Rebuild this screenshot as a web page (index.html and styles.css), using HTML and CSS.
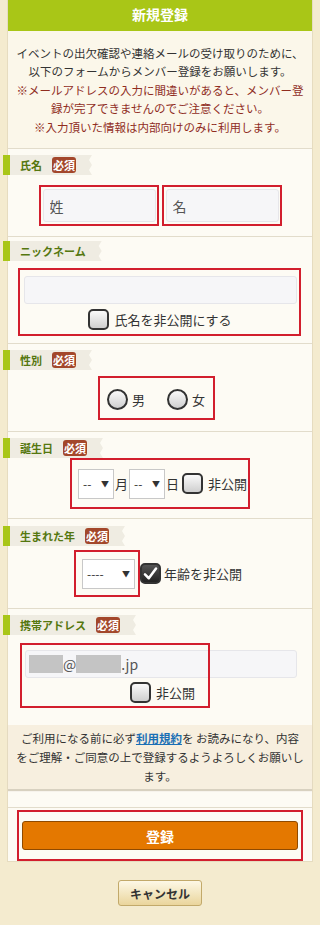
FILE: index.html
```html
<!DOCTYPE html>
<html lang="ja">
<head>
    <meta charset="UTF-8">
    <meta name="viewport" content="width=device-width, initial-scale=1.0">
    <title>新規登録</title>
    <link rel="stylesheet" href="styles.css">
</head>
<body>
    <div class="container">
        <h1 class="page-title">新規登録</h1>
        <div class="intro">
            イベントの出欠確認や連絡メールの受け取りのために、<br>
            以下のフォームからメンバー登録をお願いします。<br>
            <span class="notice">※メールアドレスの入力に間違いがあると、メンバー登<br>録が完了できませんのでご注意ください。</span><br>
            <span class="notice">※入力頂いた情報は内部向けのみに利用します。</span>
        </div>

        <div class="section sec-name">
            <div class="tab">氏名<span class="badge">必須</span></div>
            <div class="field name-field">
                <div class="mark"><input type="text" class="text-input" placeholder="姓"></div>
                <div class="mark"><input type="text" class="text-input" placeholder="名"></div>
            </div>
        </div>

        <div class="section sec-nick">
            <div class="tab">ニックネーム</div>
            <div class="field">
                <div class="mark nick-box">
                    <input type="text" class="text-input wide">
                    <label class="check-label"><span class="checkbox"></span>氏名を非公開にする</label>
                </div>
            </div>
        </div>

        <div class="section sec-gender">
            <div class="tab">性別<span class="badge">必須</span></div>
            <div class="field">
                <div class="mark gender-box">
                    <label class="radio-label"><span class="radio"></span>男</label>
                    <label class="radio-label"><span class="radio"></span>女</label>
                </div>
            </div>
        </div>

        <div class="section sec-birth">
            <div class="tab">誕生日<span class="badge">必須</span></div>
            <div class="field">
                <div class="mark birth-box">
                    <span class="select">--<span class="arrow">▼</span></span>月<span class="select">--<span class="arrow">▼</span></span>日
                    <label class="check-label"><span class="checkbox"></span>非公開</label>
                </div>
            </div>
        </div>

        <div class="section sec-year">
            <div class="tab">生まれた年<span class="badge">必須</span></div>
            <div class="field year-field">
                <div class="mark year-box">
                    <span class="select year-select">----<span class="arrow">▼</span></span>
                </div>
                <label class="check-label"><span class="checkbox checked">
                    <svg viewBox="0 0 20 20" width="18" height="18"><path d="M3.5 10.5 L8 15 L16.5 3.5" fill="none" stroke="#fff" stroke-width="3" stroke-linecap="round" stroke-linejoin="round"/></svg>
                </span>年齢を非公開</label>
            </div>
        </div>

        <div class="section sec-mail">
            <div class="tab">携帯アドレス<span class="badge">必須</span></div>
            <div class="mail-field">
                <div class="mail-input"><span class="mask m1"></span>@<span class="mask m2"></span>.jp</div>
                <label class="check-label mail-check"><span class="checkbox"></span>非公開</label>
                <div class="mark mail-mark"></div>
            </div>
        </div>

        <div class="terms">
            ご利用になる前に必ず<a href="#" class="terms-link">利用規約</a>を お読みになり、内容<br>
            をご理解・ご同意の上で登録するようよろしくお願いし<br>
            ます。
        </div>

        <div class="submit-area">
            <div class="mark submit-mark">
                <button class="submit-button">登録</button>
            </div>
        </div>
    </div>

    <div class="cancel-area">
        <button class="cancel-button">キャンセル</button>
    </div>
</body>
</html>
```

FILE: styles.css
```css
body {
    font-family: "Noto Sans CJK JP", "Liberation Sans", sans-serif;
    background-color: #f4ebcf;
    margin: 0;
    padding: 0;
    color: #333;
}
.container {
    margin: 0 7px;
    background-color: #fdfbf4;
    border-left: 1px solid #e6dcc0;
    border-right: 1px solid #e6dcc0;
    border-bottom: 1px solid #e6dcc0;
}
.page-title {
    margin: 0;
    height: 31px;
    line-height: 29px;
    background-color: #a9c617;
    color: #fff;
    font-size: 14px;
    font-weight: bold;
    text-align: center;
}
.intro {
    padding: 13px 0 12px;
    font-size: 11.5px;
    line-height: 18.4px;
    text-align: center;
    color: #333;
    background-color: #fbf7ea;
}
.notice {
    color: #902d1f;
}
.section {
    border-top: 1px solid #e2dccb;
    padding: 6px 0 10px;
}
.tab {
    display: flex;
    align-items: center;
    margin-left: -5px;
    width: fit-content;
    height: 20px;
    padding: 0 16px 0 10px;
    border-left: 7px solid #a9c617;
    background-color: #efece2;
    color: #55770f;
    font-size: 11px;
    font-weight: bold;
    clip-path: polygon(0 0, 100% 0, calc(100% - 3px) 25%, 100% 50%, calc(100% - 3px) 75%, 100% 100%, 0 100%);
}
.badge {
    margin-left: 10px;
    padding: 0 1px;
    background-color: #a3472b;
    color: #fff;
    font-size: 11px;
    line-height: 16px;
    border-radius: 3px;
}
.field {
    display: flex;
    justify-content: center;
    align-items: center;
    margin-top: 10px;
    white-space: nowrap;
}
.mark {
    border: 2px solid #d21e2d;
    box-sizing: border-box;
}
.check-label {
    display: flex;
    align-items: center;
    gap: 5px;
    font-size: 13px;
    color: #333;
    white-space: nowrap;
}
.checkbox {
    display: inline-flex;
    align-items: center;
    justify-content: center;
    box-sizing: border-box;
    width: 21px;
    height: 21px;
    border: 2px solid #333;
    border-radius: 5px;
    background: linear-gradient(#fafafa, #cfcfcf);
}
.checkbox.checked {
    background: linear-gradient(#555, #222);
}
.text-input {
    box-sizing: border-box;
    width: 115px;
    height: 33px;
    border: 1px solid #e6e6ea;
    border-radius: 3px;
    background-color: #f6f6f8;
    font-family: inherit;
    font-size: 14px;
    padding: 0 6px;
    color: #555;
}
.text-input::placeholder {
    color: #555;
}

/* 氏名 */
.name-field {
    gap: 3px;
}
.name-field .mark {
    width: 120px;
    height: 41px;
    padding: 2px 0 0 2px;
}
.name-field .text-input {
    width: 113px;
}

/* ニックネーム */
.sec-nick {
    padding: 4px 0 7px;
}
.sec-nick .field {
    margin-top: 7px;
}
.nick-box {
    width: 283px;
    height: 68px;
    margin-left: -2px;
    display: flex;
    flex-direction: column;
    align-items: center;
    padding: 6px 2px 0 4px;
}
.text-input.wide {
    width: 100%;
    height: 28px;
}
.nick-box .check-label {
    margin-top: 5px;
}

/* 性別 */
.sec-gender {
    padding: 6px 0 11px;
}
.sec-gender .field {
    margin-top: 6px;
}
.gender-box {
    width: 117px;
    height: 44px;
    display: flex;
    align-items: center;
    justify-content: center;
    gap: 22px;
    margin-left: -8px;
    padding-top: 2px;
}
.radio-label {
    display: flex;
    align-items: center;
    gap: 4px;
    font-size: 13px;
}
.radio {
    box-sizing: border-box;
    width: 21px;
    height: 21px;
    border: 2px solid #333;
    border-radius: 50%;
    background: linear-gradient(#fafafa, #cfcfcf);
}

/* 誕生日 */
.sec-birth {
    padding: 6px 0 9px;
}
.sec-birth .field {
    margin-top: 0;
}
.birth-box {
    width: 180px;
    height: 51px;
    display: flex;
    align-items: center;
    padding-left: 6px;
    gap: 1px;
    font-size: 13px;
}
.select {
    display: inline-flex;
    align-items: center;
    justify-content: space-between;
    box-sizing: border-box;
    width: 36px;
    height: 30px;
    padding: 0 4px;
    background-color: #fff;
    border: 1px solid #c8c8c8;
    font-size: 12px;
    color: #333;
}
.arrow {
    font-size: 8px;
}
.birth-box .check-label {
    margin-left: 2px;
}

/* 生まれた年 */
.sec-year {
    padding: 7px 0 11px;
}
.year-field {
    margin-top: 4px;
    justify-content: flex-start;
    padding-left: 66px;
}
.year-box {
    width: 66px;
    height: 47px;
    display: flex;
    align-items: center;
    padding-left: 6px;
}
.year-select {
    width: 53px;
}
.year-field .check-label {
    gap: 3px;
}

/* 携帯アドレス */
.sec-mail {
    padding: 6px 0 0;
}
.mail-field {
    position: relative;
    display: flex;
    flex-direction: column;
    align-items: flex-start;
    height: 65px;
    margin-top: 8px;
}
.mail-input {
    display: flex;
    align-items: center;
    box-sizing: border-box;
    width: 272px;
    height: 28px;
    margin: 7px 0 0 17px;
    padding-left: 3px;
    border: 1px solid #e6e6ea;
    border-radius: 3px;
    background-color: #f6f6f8;
    font-size: 14px;
    color: #555;
}
.mask {
    display: inline-block;
    height: 18px;
    background-color: #c4c4c4;
}
.m1 {
    width: 34px;
}
.m2 {
    width: 45px;
}
.mail-check {
    margin: 4px 0 0 122px;
}
.mail-mark {
    position: absolute;
    top: 0;
    left: 12px;
    width: 190px;
    height: 65px;
}

/* 利用規約 */
.terms {
    margin-top: 17px;
    padding: 4px 0 3px;
    background-color: #f7efdf;
    box-shadow: 0 2px 1px #d8d1c0;
    font-size: 11.5px;
    line-height: 19px;
    text-align: center;
    color: #333;
}
.terms-link {
    color: #1a6fb5;
    font-weight: bold;
    text-decoration: underline;
}
.submit-area {
    margin-top: 18px;
    border-top: 1px solid #e2dccb;
    padding: 2px 9px 0 9px;
}
.submit-mark {
    height: 51px;
    padding: 9px 3px 0 3px;
}
.submit-button {
    width: 100%;
    height: 29px;
    background-color: #e47800;
    color: #fff;
    border: 1px solid #8f4a00;
    border-radius: 3px;
    font-family: inherit;
    font-size: 14px;
    font-weight: bold;
    cursor: pointer;
}
.cancel-area {
    display: flex;
    justify-content: center;
    padding-top: 18px;
}
.cancel-button {
    width: 84px;
    height: 26px;
    background: linear-gradient(#fdf8e6, #ead59c);
    border: 1px solid #c2a96a;
    border-radius: 3px;
    font-family: inherit;
    font-size: 12px;
    font-weight: bold;
    color: #333;
    cursor: pointer;
}
```
